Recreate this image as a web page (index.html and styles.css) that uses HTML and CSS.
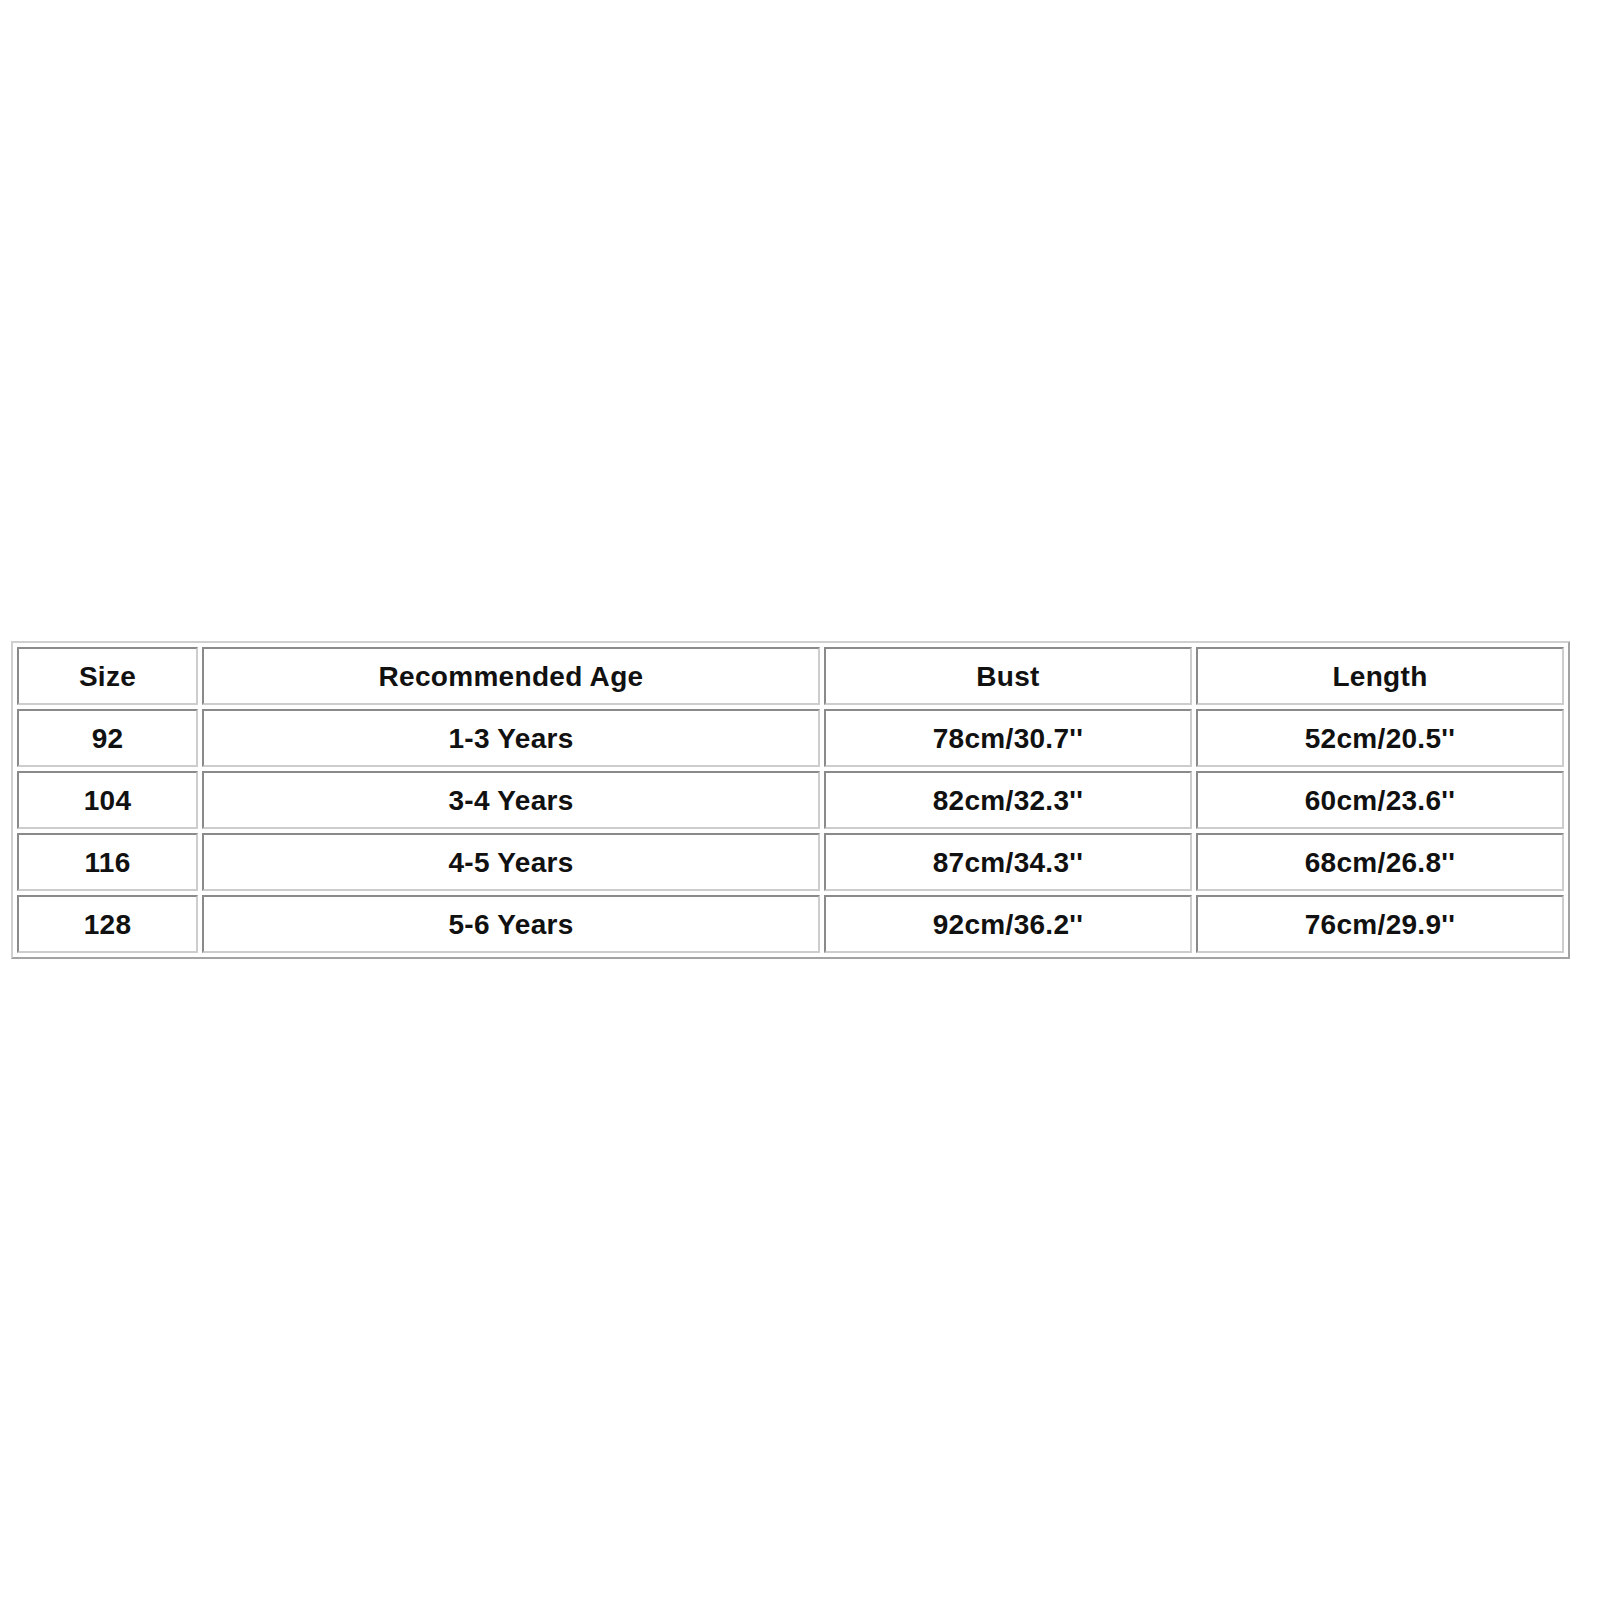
FILE: index.html
```html
<!DOCTYPE html>
<html>
<head>
<meta charset="utf-8">
<title>Size Chart</title>
<link rel="stylesheet" href="styles.css">
</head>
<body>
<div class="page">
  <div class="chart">
    <div class="cell">Size</div>
    <div class="cell">Recommended Age</div>
    <div class="cell">Bust</div>
    <div class="cell">Length</div>

    <div class="cell">92</div>
    <div class="cell">1-3 Years</div>
    <div class="cell">78cm/30.7''</div>
    <div class="cell">52cm/20.5''</div>

    <div class="cell">104</div>
    <div class="cell">3-4 Years</div>
    <div class="cell">82cm/32.3''</div>
    <div class="cell">60cm/23.6''</div>

    <div class="cell">116</div>
    <div class="cell">4-5 Years</div>
    <div class="cell">87cm/34.3''</div>
    <div class="cell">68cm/26.8''</div>

    <div class="cell">128</div>
    <div class="cell">5-6 Years</div>
    <div class="cell">92cm/36.2''</div>
    <div class="cell">76cm/29.9''</div>
  </div>
</div>
</body>
</html>
```

FILE: styles.css
```css
html, body {
  margin: 0;
  padding: 0;
  background: #ffffff;
}

.page {
  padding: 641px 0 0 11px;
  width: 1600px;
  height: 1600px;
  box-sizing: border-box;
}

.chart {
  display: grid;
  grid-template-columns: 181px 618px 368px 368px;
  grid-auto-rows: 58px;
  gap: 4px;
  padding: 4px;
  width: max-content;
  border-style: solid;
  border-width: 2px;
  border-color: #cfcfcf #a3a3a3 #a3a3a3 #cfcfcf;
  font-family: "Liberation Sans", Arial, sans-serif;
  font-weight: bold;
  font-size: 28px;
  letter-spacing: 0.3px;
  color: #111111;
}

.cell {
  box-sizing: border-box;
  display: flex;
  align-items: center;
  justify-content: center;
  padding-top: 2px;
  border-style: solid;
  border-width: 2px;
  border-color: #8a8a8a #cdcdcd #cdcdcd #8a8a8a;
  white-space: nowrap;
}
```
